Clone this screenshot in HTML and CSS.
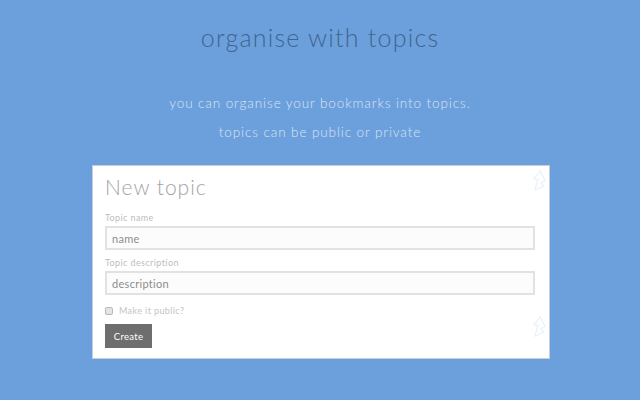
FILE: index.html
```html
<!DOCTYPE html>
<html>
<head>
<meta charset="utf-8">
<link rel="stylesheet" href="styles.css">
</head>
<body>
<div class="page">
  <h1 class="title">organise with topics</h1>
  <p class="lead first">you can organise your bookmarks into topics.</p>
  <p class="lead">topics can be public or private</p>
  <div class="card">
    <svg class="mark mark-top" width="16" height="22" viewBox="0 0 16 22"><path d="M9 1 L3 9 L7 9 L4 20 L13 16 L10 13 L14 10 Z" fill="none" stroke="#e8f0fa" stroke-width="1.2"/></svg>
    <svg class="mark mark-bottom" width="16" height="22" viewBox="0 0 16 22"><path d="M9 1 L3 9 L7 9 L4 20 L13 16 L10 13 L14 10 Z" fill="none" stroke="#e8f0fa" stroke-width="1.2"/></svg>
    <h2 class="card-title">New topic</h2>
    <label class="field-label">Topic name</label>
    <input class="field" type="text" placeholder="name">
    <label class="field-label">Topic description</label>
    <input class="field" type="text" placeholder="description">
    <label class="check"><input type="checkbox" class="box"><span>Make it public?</span></label>
    <button class="btn">Create</button>
  </div>
</div>
</body>
</html>
```
FILE: styles.css
```css
html, body {
  margin: 0;
  padding: 0;
  background: #6ca0dc;
  font-family: "Lato", "Open Sans", sans-serif;
}
.page {
  width: 640px;
  height: 400px;
  display: flex;
  flex-direction: column;
  align-items: center;
  padding-top: 22px;
  box-sizing: border-box;
}
.title {
  margin: 0;
  font-weight: 300;
  font-size: 25px;
  letter-spacing: 1.2px;
  color: #41658f;
  line-height: 30px;
}
.lead {
  margin: 0;
  font-weight: 300;
  font-size: 13.5px;
  letter-spacing: 0.9px;
  color: #dbe4f2;
  line-height: 18px;
}
.lead.first { margin-top: 42px; }
.lead + .lead { margin-top: 11px; }
.card {
  position: relative;
  margin-top: 24px;
  margin-left: 2px;
  width: 458px;
  box-sizing: border-box;
  background: #fff;
  border: 1px solid #c9ccd2;
  padding: 8px 14px 10px 12px;
  display: flex;
  flex-direction: column;
  align-items: flex-start;
}
.mark { position: absolute; right: 2px; }
.mark-top { top: 4px; }
.mark-bottom { top: 150px; }
.card-title {
  margin: 0;
  font-weight: 300;
  font-size: 21px;
  letter-spacing: 1px;
  color: #a3a3a3;
  line-height: 26px;
}
.field-label {
  margin-top: 12px;
  font-size: 9px;
  letter-spacing: 0.4px;
  color: #bdbdbd;
  line-height: 12px;
}
.field-label + .field { margin-top: 2px; }
.field + .field-label { margin-top: 7px; }
.field {
  width: 430px;
  height: 24px;
  box-sizing: border-box;
  border: 2px solid #e2e2e2;
  background: #fcfcfc;
  padding: 0 5px;
  font-family: inherit;
  font-size: 11px;
  color: #777;
  outline: none;
}
.field::placeholder { color: #8c8c8c; letter-spacing: 0.3px; }
.check {
  display: flex;
  align-items: center;
  margin-top: 10px;
  font-size: 9px;
  letter-spacing: 0.4px;
  color: #c4c4c4;
}
.box {
  appearance: none;
  -webkit-appearance: none;
  width: 8px;
  height: 8px;
  margin: 0 6px 0 0;
  border: 1px solid #b9b9b9;
  border-radius: 2px;
  background: #e4e4e4;
}
.btn {
  margin-top: 8px;
  width: 47px;
  height: 24px;
  border: 0;
  background: #6e6e6e;
  color: #fff;
  font-family: inherit;
  font-size: 9.5px;
  letter-spacing: 0.3px;
  padding: 0;
}
```
